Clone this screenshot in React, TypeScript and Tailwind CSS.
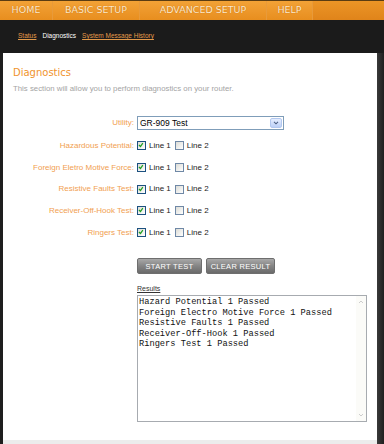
import React from "react";

function Check({ checked }: { checked: boolean }) {
  return (
    <span
      className={
        "relative inline-flex w-[9px] h-[9px] border bg-gradient-to-br from-[#dcdcd6] to-white " +
        (checked ? "border-[#1c5180]" : "border-[#6f88a6]")
      }
    >
      {checked && (
        <svg viewBox="0 0 9 9" className="absolute left-0 top-0 w-[7px] h-[7px]">
          <path d="M1.2 3.8 L3.2 5.8 L6.2 1.5" stroke="#21a121" strokeWidth="1.6" fill="none" />
        </svg>
      )}
    </span>
  );
}

const tabs = [
  { label: "HOME", w: "w-[53px]" },
  { label: "BASIC SETUP", w: "w-[87px]" },
  { label: "ADVANCED SETUP", w: "w-[127px]" },
  { label: "HELP", w: "w-[46px]" },
];

const rows = [
  "Hazardous Potential:",
  "Foreign Eletro Motive Force:",
  "Resistive Faults Test:",
  "Receiver-Off-Hook Test:",
  "Ringers Test:",
];

const results = [
  "Hazard Potential 1 Passed",
  "Foreign Electro Motive Force 1 Passed",
  "Resistive Faults 1 Passed",
  "Receiver-Off-Hook 1 Passed",
  "Ringers Test 1 Passed",
];

export default function App() {
  return (
    <div
      className="w-[384px] h-[444px] bg-[#1b1b1b] flex flex-col overflow-hidden"
      style={{ fontFamily: '"Liberation Sans", Arial, sans-serif' }}
    >
      {/* nav */}
      <div className="h-[20px] flex border-t border-[#5a3c12] bg-gradient-to-b from-[#ec9526] to-[#e0841a]">
        {tabs.map((t) => (
          <div
            key={t.label}
            className={
              t.w +
              " h-full flex items-center justify-center border-r border-[#e89a3a] bg-gradient-to-b from-[#f2a236] to-[#e88e1e] text-[9.5px] text-[#ffe9c8]"
            }
            style={{ fontFamily: '"DejaVu Sans", sans-serif', textShadow: "0 0 1px #b8660c" }}
          >
            {t.label}
          </div>
        ))}
        <div className="flex-1" />
      </div>
      {/* breadcrumb */}
      <div className="h-[33px] flex items-center pl-[18px] gap-[6px] text-[6.5px] pb-[1px]">
        <span className="text-[#e39a4a] underline">Status</span>
        <span className="text-white">Diagnostics</span>
        <span className="text-[#e39a4a] underline">System Message History</span>
      </div>
      {/* body */}
      <div className="flex-1 flex">
        <div className="w-[3px] bg-[#1e1e1e]" />
        <div className="flex-1 bg-white flex flex-col">
          <div className="pl-[10px] pt-[13px]">
            <div className="leading-[13px] text-[#f0932c]" style={{ fontFamily: '"DejaVu Sans", sans-serif', fontSize: "10px" }}>
              Diagnostics
            </div>
            <div className="mt-[5px] text-[7.8px] leading-[10px] text-[#a4a4a4]">
              This section will allow you to perform diagnostics on your router.
            </div>
          </div>
          <div className="mt-[22px] flex flex-col">
            <div className="flex items-center h-[14px]">
              <div className="w-[131px] text-right text-[8px] text-[#f1a050]">Utility:</div>
              <div className="ml-[3px] w-[147px] h-[14px] border border-[#7f9db9] flex items-center justify-between">
                <span className="pl-[2px] text-[8.5px] text-black">GR-909 Test</span>
                <span className="mr-[1px] w-[12px] h-[10px] rounded-[2px] border border-[#b3c8ef] bg-gradient-to-b from-[#e6eeff] to-[#bcd0f7] flex items-center justify-center">
                  <svg viewBox="0 0 8 6" className="w-[6px] h-[4px]">
                    <path d="M1 1.2 L4 4.2 L7 1.2" stroke="#4d6185" strokeWidth="1.6" fill="none" />
                  </svg>
                </span>
              </div>
            </div>
            <div className="mt-[5px] flex flex-col">
              {rows.map((r) => (
                <div key={r} className="flex items-center h-[21.7px]">
                  <div className="w-[131px] text-right text-[8px] text-[#f1a050] whitespace-nowrap">{r}</div>
                  <div className="ml-[3px] flex items-center text-[8px] text-[#222]">
                    <Check checked />
                    <span className="ml-[3px]">Line 1</span>
                    <span className="ml-[4px] flex">
                      <Check checked={false} />
                    </span>
                    <span className="ml-[3px]">Line 2</span>
                  </div>
                </div>
              ))}
            </div>
            <div className="mt-[15px] ml-[134px] flex gap-[4px]">
              {["START TEST", "CLEAR RESULT"].map((b) => (
                <div
                  key={b}
                  className={
                    (b === "START TEST" ? "w-[65px]" : "w-[69px]") +
                    " h-[16px] rounded-[2px] border border-[#6e6e6e] bg-gradient-to-b from-[#a8a8a8] via-[#858585] to-[#6a6a6a] flex items-center justify-center text-[7.5px] text-white tracking-[0.3px]"
                  }
                >
                  {b}
                </div>
              ))}
            </div>
            <div className="mt-[10px] ml-[134px] h-[10px] text-[7px] leading-[10px] text-[#333] underline">Results</div>
            <div className="mt-[1px] ml-[134px] w-[230px] h-[127px] border border-[#a7abb0] bg-white flex">
              <div
                className="flex-1 pl-[1px] pt-[1px] text-[8.7px] leading-[10.4px] text-[#111] whitespace-pre"
                style={{ fontFamily: '"Liberation Mono", "Courier New", monospace' }}
              >
                {results.map((l) => (
                  <div key={l}>{l}</div>
                ))}
              </div>
              <div className="w-[10px] bg-[#fbfbf8] flex flex-col justify-between items-center py-[2px]">
                <svg viewBox="0 0 8 6" className="w-[6px] h-[4px] mt-[2px]">
                  <path d="M1 4.5 L4 1.5 L7 4.5" stroke="#c9c9c9" strokeWidth="1.4" fill="none" />
                </svg>
                <svg viewBox="0 0 8 6" className="w-[6px] h-[4px] mb-[2px]">
                  <path d="M1 1.5 L4 4.5 L7 1.5" stroke="#c9c9c9" strokeWidth="1.4" fill="none" />
                </svg>
              </div>
            </div>
          </div>
          <div className="flex-1" />
          <div className="h-[4px] bg-[#ececec]" />
        </div>
        <div className="w-[7px] bg-gradient-to-r from-[#3a3a3a] to-[#1f1f1f]" />
      </div>
    </div>
  );
}
